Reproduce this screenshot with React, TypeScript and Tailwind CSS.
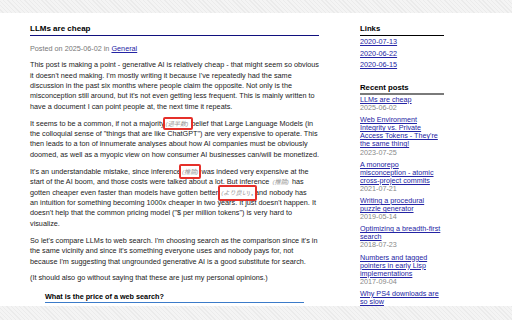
import React from "react";

function Ann({ text, box }: { text: string; box?: string }) {
  return (
    <span className="relative ml-[1px] mr-[1px] text-[6.2px] italic text-[#9a9a9a] font-['Liberation_Sans','Noto_Sans_CJK_JP',sans-serif]">
      ({text})
      {box ? <span className={box} /> : null}
    </span>
  );
}

const posts: { title: string; date?: string }[] = [
  { title: "LLMs are cheap", date: "2025-06-02" },
  { title: "Web Environment Integrity vs. Private Access Tokens - They're the same thing!", date: "2023-07-25" },
  { title: "A monorepo misconception - atomic cross-project commits", date: "2021-07-21" },
  { title: "Writing a procedural puzzle generator", date: "2019-05-14" },
  { title: "Optimizing a breadth-first search", date: "2018-07-23" },
  { title: "Numbers and tagged pointers in early Lisp implementations", date: "2017-09-04" },
  { title: "Why PS4 downloads are so slow" },
];

export default function App() {
  const hatch =
    "bg-[repeating-linear-gradient(45deg,#f4f4f4_0px,#f4f4f4_2px,#ebebeb_2px,#ebebeb_3px)]";
  return (
    <div className="w-[512px] h-[320px] overflow-hidden flex flex-col bg-white font-['Liberation_Sans',Arial,sans-serif] text-[#222]">
      <div className={`h-[13px] shrink-0 ${hatch}`} />
      <div className="h-[293px] shrink-0 overflow-hidden bg-white flex pl-[30px] pt-[11px]">
        <main className="w-[289px] shrink-0">
          <h1 className="text-[8px] font-bold leading-[10px] pb-[1px] border-b border-[#10107e] text-black">
            LLMs are cheap
          </h1>
          <div className="mt-[7.5px] text-[7.25px] leading-[10.4px] text-[#777]">
            Posted on 2025-06-02 in{" "}
            <a className="text-[#2424a4] underline">General</a>
          </div>
          <div className="mt-[6.2px] text-[7.25px] leading-[10.4px] flex flex-col gap-[6.5px] whitespace-nowrap">
            <p>
              This post is making a point - generative AI is relatively cheap - that might seem so obvious
              <br />
              it doesn't need making. I'm mostly writing it because I've repeatedly had the same
              <br />
              discussion in the past six months where people claim the opposite. Not only is the
              <br />
              misconception still around, but it's not even getting less frequent. This is mainly written to
              <br />
              have a document I can point people at, the next time it repeats.
            </p>
            <p>
              It seems to be a common, if not a majority
              <Ann
                text="過半数"
                box="absolute left-[-3px] right-[-5px] top-[-3px] bottom-[-3px] border-2 border-[#e5302a] rounded-[2px]"
              />{" "}
              belief that Large Language Models (in
              <br />
              the colloquial sense of "things that are like ChatGPT") are very expensive to operate. This
              <br />
              then leads to a ton of innumerate analyses about how AI companies must be obviously
              <br />
              doomed, as well as a myopic view on how consumer AI businesses can/will be monetized.
            </p>
            <p>
              It's an understandable mistake, since inference
              <Ann
                text="推論"
                box="absolute left-[-3px] right-[-3px] top-[-4px] bottom-[-4px] border-2 border-[#e5302a] rounded-[2px]"
              />{" "}
              was indeed very expensive at the
              <br />
              start of the AI boom, and those costs were talked about a lot. But inference <Ann text="推論" /> has
              <br />
              gotten cheaper even faster than models have gotten better{" "}
              <Ann
                text="より良い"
                box="absolute left-[-3px] right-[-7px] top-[-4px] bottom-[-5px] border-2 border-[#e5302a] rounded-[2px]"
              />
              , and nobody has
              <br />
              an intuition for something becoming 1000x cheaper in two years. It just doesn't happen. It
              <br />
              doesn't help that the common pricing model ("$ per million tokens") is very hard to
              <br />
              visualize.
            </p>
            <p>
              So let's compare LLMs to web search. I'm choosing search as the comparison since it's in
              <br />
              the same vicinity and since it's something everyone uses and nobody pays for, not
              <br />
              because I'm suggesting that ungrounded generative AI is a good substitute for search.
            </p>
            <p>(It should also go without saying that these are just my personal opinions.)</p>
          </div>
          <h2 className="mt-[8.3px] mx-[15px] text-[7.25px] font-bold leading-[9px] pb-[1px] border-b border-[#3b7bc9] text-black">
            What is the price of a web search?
          </h2>
        </main>
        <aside className="ml-[41px] w-[84px] shrink-0">
          <h3 className="text-[7.75px] font-bold leading-[10px] pb-[1px] border-b border-black text-black">
            Links
          </h3>
          <ul className="text-[7.25px] leading-[11.7px]">
            <li>
              <a className="text-[#2424a4] underline">2020-07-13</a>
            </li>
            <li>
              <a className="text-[#2424a4] underline">2020-06-22</a>
            </li>
            <li>
              <a className="text-[#2424a4] underline">2020-06-15</a>
            </li>
          </ul>
          <h3 className="mt-[11.6px] text-[7.75px] font-bold leading-[10px] border-b-2 border-[#7a7a7a] text-black">
            Recent posts
          </h3>
          <ul className="mt-[1.25px] flex flex-col gap-[4px] text-[7.2px] leading-[8.1px]">
            {posts.map((p) => (
              <li key={p.title}>
                <a className="text-[#2424a4] underline">{p.title}</a>
                {p.date ? <div className="text-[#888]">{p.date}</div> : null}
              </li>
            ))}
          </ul>
        </aside>
      </div>
      <div className={`flex-1 ${hatch}`} />
    </div>
  );
}
